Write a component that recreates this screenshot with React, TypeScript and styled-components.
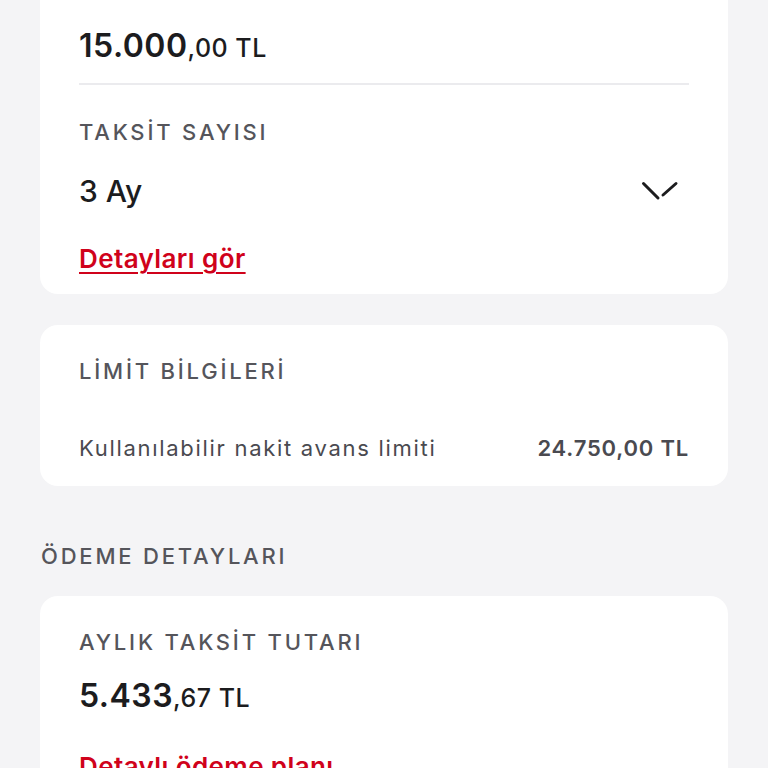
import styled, { createGlobalStyle } from "styled-components";

const GlobalStyle = createGlobalStyle`
  html, body {
    margin: 0;
    padding: 0;
    background: #f4f4f6;
    font-family: "Inter", "Liberation Sans", sans-serif;
    -webkit-font-smoothing: antialiased;
  }
  * {
    box-sizing: border-box;
  }
`;

const Chevron = () => (
  <svg width="38" height="20" viewBox="0 0 38 20" fill="none">
    <path d="M2.5 2.5 L17 17" stroke="#1c1c1e" strokeWidth="3" strokeLinecap="round" />
    <path d="M22 14 L35 2.5" stroke="#1c1c1e" strokeWidth="3" strokeLinecap="round" />
  </svg>
);

const App = () => {
  return (
    <>
      <GlobalStyle />
      <Page>
        <Card>
          <Caption>TUTAR</Caption>
          <Amount>
            15.000<small>,00 TL</small>
          </Amount>
          <Divider />
          <Caption>TAKSİT SAYISI</Caption>
          <SelectRow>
            <span>3 Ay</span>
            <Chevron />
          </SelectRow>
          <LinkText href="#">Detayları gör</LinkText>
        </Card>

        <Card>
          <Caption>LİMİT BİLGİLERİ</Caption>
          <InfoRow>
            <span>Kullanılabilir nakit avans limiti</span>
            <strong>24.750,00 TL</strong>
          </InfoRow>
        </Card>

        <SectionTitle>ÖDEME DETAYLARI</SectionTitle>

        <Card $tall>
          <Caption>AYLIK TAKSİT TUTARI</Caption>
          <Amount>
            5.433<small>,67 TL</small>
          </Amount>
          <LinkText href="#">Detaylı ödeme planı</LinkText>
        </Card>
      </Page>
    </>
  );
};

export default App;

const Page = styled.div`
  padding: 0 40px;
  margin-top: -54px;
  height: 822px;
  overflow: hidden;
  display: flex;
  flex-direction: column;
  gap: 31px;
`;

const Card = styled.section<{ $tall?: boolean }>`
  background: #ffffff;
  border-radius: 18px;
  padding: 33px 39px ${({ $tall }) => ($tall ? "60px" : "19px")};
  display: flex;
  flex-direction: column;
  flex-shrink: 0;
`;

const Caption = styled.div`
  font-size: 22px;
  line-height: 26px;
  font-weight: 500;
  letter-spacing: 2.8px;
  color: #55555b;
`;

const Amount = styled.div`
  margin-top: 22px;
  font-size: 32px;
  line-height: 38px;
  font-weight: 600;
  letter-spacing: 0.5px;
  color: #1c1c1e;

  small {
    font-size: 25px;
    font-weight: 500;
    letter-spacing: 0.5px;
  }
`;

const Divider = styled.div`
  height: 2px;
  background: #ebebee;
  margin: 16px 0 34px;
`;

const SelectRow = styled.div`
  display: flex;
  justify-content: space-between;
  align-items: center;
  margin-top: 28px;
  font-size: 30px;
  line-height: 36px;
  font-weight: 500;
  color: #1c1c1e;

  svg {
    margin-right: 10px;
  }
`;

const LinkText = styled.a`
  align-self: flex-start;
  margin-top: 34px;
  font-size: 26px;
  line-height: 32px;
  font-weight: 600;
  letter-spacing: 0.4px;
  color: #d0021b;
  text-decoration: underline;
  text-underline-offset: 4px;
  text-decoration-thickness: 2px;
`;

const InfoRow = styled.div`
  display: flex;
  justify-content: space-between;
  align-items: baseline;
  margin-top: 51px;
  padding-bottom: 6px;
  font-size: 22px;
  line-height: 26px;
  color: #4a4a50;
  letter-spacing: 1.7px;

  strong {
    font-weight: 600;
    letter-spacing: 0.8px;
  }
`;

const SectionTitle = styled.h2`
  margin: 26px 0 -4px 1px;
  font-size: 22px;
  line-height: 26px;
  font-weight: 500;
  letter-spacing: 2.8px;
  color: #55555b;
`;
